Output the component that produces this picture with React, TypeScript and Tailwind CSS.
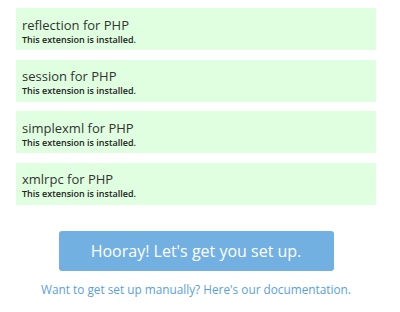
import React from "react";

const items = ["reflection", "session", "simplexml", "xmlrpc"];

export default function App() {
  return (
    <div className="w-[400px] h-[312px] bg-white overflow-hidden" style={{ fontFamily: '"Open Sans", sans-serif' }}>
      <div className="w-[360px] ml-[16px]">
        <div className="flex flex-col gap-[9.5px] pt-[8px]">
          {items.map((n) => (
            <div key={n} className="h-[42px] bg-[#e0ffe0] pl-[6px] pt-[8.5px]">
              <div className="text-[13px] leading-[17px] text-[#333]">{n} for PHP</div>
              <div className="text-[9px] leading-[11px] font-semibold text-[#222]">This extension is installed.</div>
            </div>
          ))}
        </div>
        <div className="flex flex-col items-center mt-[26px]">
          <button className="w-[275px] h-[40px] rounded-[3px] bg-[#72b0e2] text-white text-[16px]">
            Hooray! Let's get you set up.
          </button>
          <div className="mt-[10px] text-[11.8px] text-[#5a9fd8] whitespace-nowrap">Want to get set up manually? Here's our documentation.</div>
        </div>
      </div>
    </div>
  );
}
